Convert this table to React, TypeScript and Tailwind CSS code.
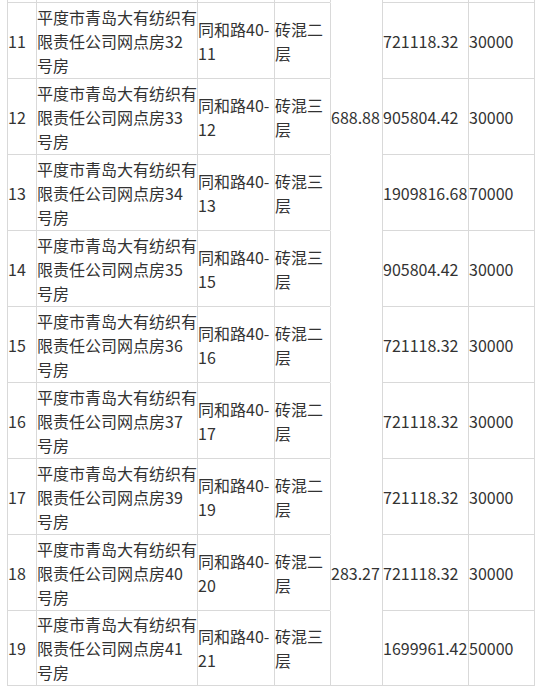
import React from "react";

type Row = {
  no: string;
  name: string[];
  addr: string[];
  kind: string[];
  area: string;
  price: string;
  deposit: string;
};

const rows: Row[] = [
  { no: "11", name: ["平度市青岛大有纺织有", "限责任公司网点房32", "号房"], addr: ["同和路40-", "11"], kind: ["砖混二", "层"], area: "", price: "721118.32", deposit: "30000" },
  { no: "12", name: ["平度市青岛大有纺织有", "限责任公司网点房33", "号房"], addr: ["同和路40-", "12"], kind: ["砖混三", "层"], area: "688.88", price: "905804.42", deposit: "30000" },
  { no: "13", name: ["平度市青岛大有纺织有", "限责任公司网点房34", "号房"], addr: ["同和路40-", "13"], kind: ["砖混三", "层"], area: "", price: "1909816.68", deposit: "70000" },
  { no: "14", name: ["平度市青岛大有纺织有", "限责任公司网点房35", "号房"], addr: ["同和路40-", "15"], kind: ["砖混三", "层"], area: "", price: "905804.42", deposit: "30000" },
  { no: "15", name: ["平度市青岛大有纺织有", "限责任公司网点房36", "号房"], addr: ["同和路40-", "16"], kind: ["砖混二", "层"], area: "", price: "721118.32", deposit: "30000" },
  { no: "16", name: ["平度市青岛大有纺织有", "限责任公司网点房37", "号房"], addr: ["同和路40-", "17"], kind: ["砖混二", "层"], area: "", price: "721118.32", deposit: "30000" },
  { no: "17", name: ["平度市青岛大有纺织有", "限责任公司网点房39", "号房"], addr: ["同和路40-", "19"], kind: ["砖混二", "层"], area: "", price: "721118.32", deposit: "30000" },
  { no: "18", name: ["平度市青岛大有纺织有", "限责任公司网点房40", "号房"], addr: ["同和路40-", "20"], kind: ["砖混二", "层"], area: "283.27", price: "721118.32", deposit: "30000" },
  { no: "19", name: ["平度市青岛大有纺织有", "限责任公司网点房41", "号房"], addr: ["同和路40-", "21"], kind: ["砖混三", "层"], area: "", price: "1699961.42", deposit: "50000" },
];

const gridCols = "grid grid-cols-[29px_161px_77px_56px_52px_86px_67px]";
const cell = "flex items-center h-[76px] border-l border-t border-[#d9d9d9] whitespace-nowrap overflow-visible";

const Lines = ({ lines }: { lines: string[] }) => (
  <div>
    {lines.map((l, i) => (
      <div key={i}>{l}</div>
    ))}
  </div>
);

const App = () => {
  return (
    <div
      className="w-[542px] h-[691px] bg-white text-[#333] text-[16px] leading-[24px] overflow-hidden"
      style={{ fontFamily: '"Microsoft YaHei", "Noto Sans CJK SC", sans-serif' }}
    >
      <div className="ml-[7px] w-[528px]">
        {/* bottom edge of the row above, cut off by the screenshot */}
        <div className={`${gridCols} h-[2px]`}>
          {[0, 1, 2, 3, 4, 5, 6].map((i) => (
            <div
              key={i}
              className={`border-l border-[#d9d9d9] ${i === 6 ? "border-r" : ""}`}
            />
          ))}
        </div>
        {rows.map((r, idx) => {
          const last = idx === rows.length - 1;
          const b = last ? "border-b" : "";
          return (
            <div key={r.no} className={gridCols}>
              <div className={`${cell} ${b}`}>{r.no}</div>
              <div className={`${cell} ${b}`}>
                <Lines lines={r.name} />
              </div>
              <div className={`${cell} ${b}`}>
                <Lines lines={r.addr} />
              </div>
              <div className={`${cell} ${b}`}>
                <Lines lines={r.kind} />
              </div>
              <div className={`${cell} border-t-transparent ${b}`}>{r.area}</div>
              <div className={`${cell} ${b}`}>{r.price}</div>
              <div className={`${cell} border-r ${b}`}>{r.deposit}</div>
            </div>
          );
        })}
      </div>
    </div>
  );
};

export default App;
